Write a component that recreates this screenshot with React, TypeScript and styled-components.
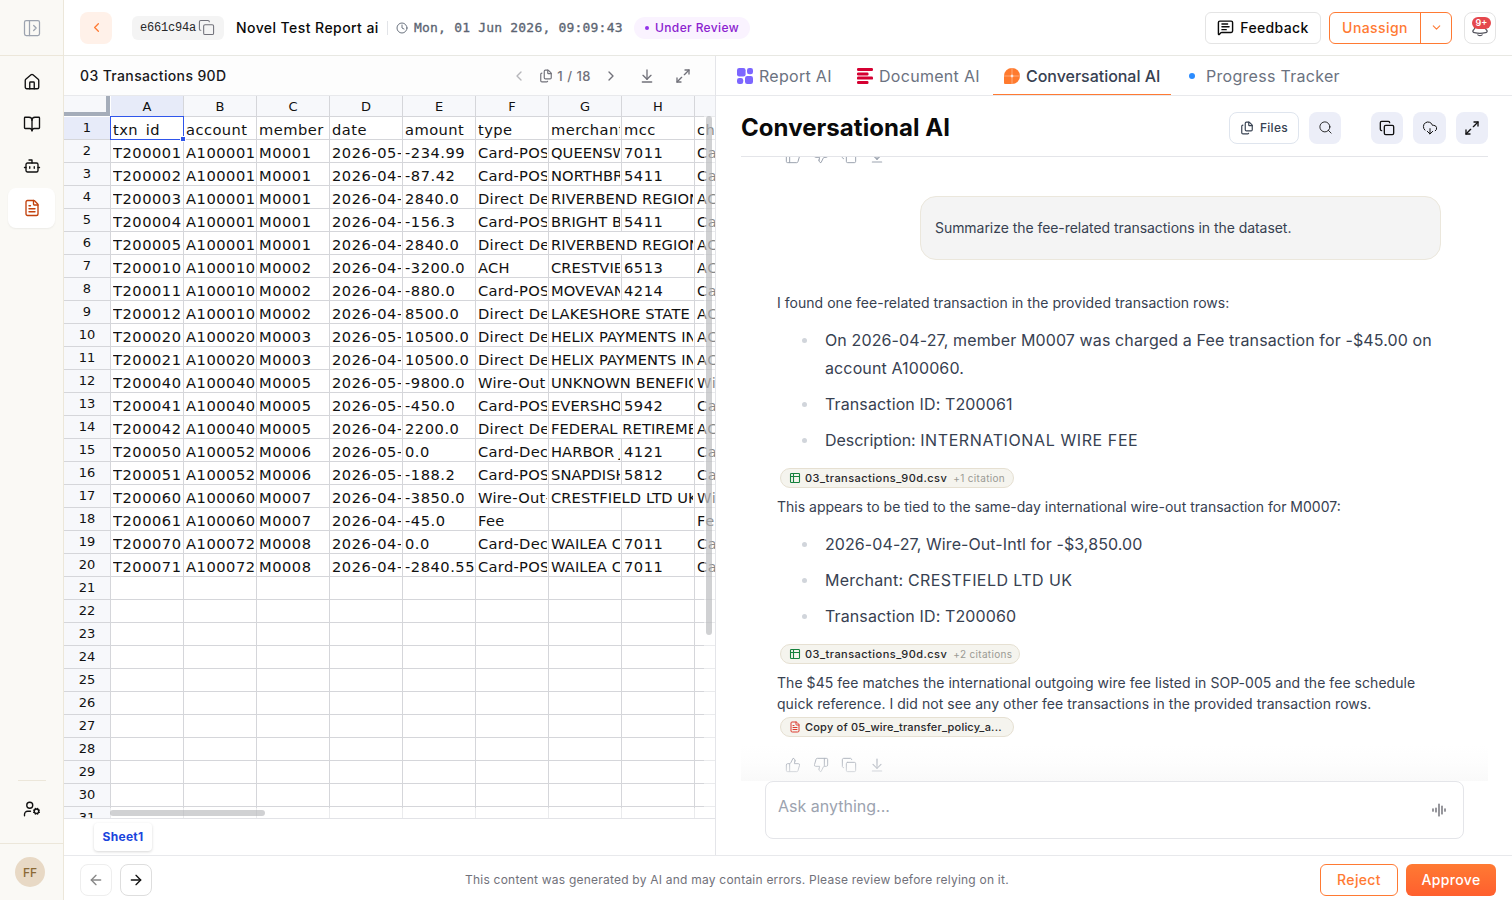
import React from "react";
import styled, { createGlobalStyle, css } from "styled-components";
import {
  ArrowDownToLine, ArrowLeft, ArrowRight, BookOpen, Bot, ChevronDown, ChevronLeft, ChevronRight,
  Clock, Copy, FileText, Files, House, Maximize2, MessageSquareText, PanelLeftOpen, Search,
  ThumbsDown, ThumbsUp, UserCog, CloudDownload,
} from "lucide-react";

const Global = createGlobalStyle`
  * { box-sizing: border-box; }
  body { margin: 0; background: #fff; font-family: Inter, "Noto Sans", sans-serif; color: #0f172a; }
  button { font-family: inherit; padding: 0; margin: 0; background: none; border: 0; letter-spacing: inherit; color: inherit; }
  svg { display: block; flex: none; }
`;

const Shell = styled.div`
  display: flex;
  width: 1512px;
  height: 900px;
  overflow: hidden;
  background: #fff;
`;

/* Side navigation */
const Sidebar = styled.nav`
  display: flex;
  flex-direction: column;
  width: 64px;
  background: #faf9f5;
  border-right: 1px solid #ece7da;
`;
const SidebarTop = styled.div`
  display: flex;
  align-items: center;
  justify-content: center;
  height: 56px;
  border-bottom: 1px solid #ece7da;
  color: #9ca3af;
`;
const NavList = styled.div`
  display: flex;
  flex-direction: column;
  gap: 2px;
  padding: 6px 8px 0;
  flex: 1;
`;
const NavItem = styled.button<{ $active?: boolean }>`
  display: flex;
  align-items: center;
  justify-content: center;
  width: 47px;
  height: 40px;
  border-radius: 8px;
  color: ${(p) => (p.$active ? "#c2410c" : "#111")};
  ${(p) => p.$active && css`background: #fff; box-shadow: 0 1px 2px rgba(0, 0, 0, 0.06);`}
`;
const NavDivider = styled.div`
  height: 1px;
  margin: 0 17px 8px 18px;
  background: #ece7da;
`;
const SidebarFoot = styled.div`
  display: flex;
  flex-direction: column;
  align-items: center;
`;
const UserArea = styled.div`
  display: flex;
  align-items: center;
  width: 63px;
  height: 57px;
  padding-left: 15px;
  border-top: 1px solid #ece7da;
  margin-top: 14px;
`;
const Avatar = styled.div`
  display: grid;
  place-items: center;
  width: 30px;
  height: 30px;
  border-radius: 50%;
  background: #e8d9c5;
  color: #8b6a35;
  font-size: 12px;
  font-weight: 500;
`;

/* Header */
const Main = styled.div`
  display: flex;
  flex-direction: column;
  width: 1448px;
`;
const Header = styled.header`
  display: flex;
  align-items: center;
  height: 56px;
  padding: 0 16px;
  border-bottom: 1px solid #e8e8e3;
`;
const BackButton = styled.button`
  display: grid;
  place-items: center;
  width: 32px;
  height: 32px;
  border-radius: 8px;
  background: #fff1e9;
  color: #ff7a33;
`;
const IdTag = styled.div`
  display: flex;
  align-items: center;
  gap: 2px;
  width: 92px;
  height: 24px;
  margin-left: 20px;
  padding-left: 8px;
  border-radius: 6px;
  background: #f4f4f4;
  color: #27272a;
  font: 400 12px "Liberation Mono", monospace;
  letter-spacing: -0.2px;
  svg { color: #71717a; }
`;
const ReportName = styled.h1`
  margin: 0 0 0 12px;
  font-size: 14px;
  font-weight: 500;
  letter-spacing: 0.43px;
  width: 143px;
  white-space: nowrap;
  color: #0a0a0a;
`;
const Rule = styled.span`
  width: 1px;
  height: 14px;
  margin: 0 8px;
  background: #e2e4e8;
`;
const Timestamp = styled.div`
  display: flex;
  align-items: center;
  gap: 6px;
  width: 227px;
  color: #5b6472;
  font: 500 13px "DejaVu Sans Mono", monospace;
  letter-spacing: 0.2px;
  -webkit-text-stroke: 0.3px #5b6472;
  white-space: nowrap;
`;
const Status = styled.div`
  display: flex;
  align-items: center;
  gap: 6px;
  height: 22px;
  width: 116px;
  margin-left: 11px;
  padding-left: 11px;
  border-radius: 11px;
  background: #faf3ff;
  color: #8b22cf;
  font-size: 12px;
  font-weight: 500;
  letter-spacing: 0.37px;
  white-space: nowrap;
  &::before { content: ""; width: 4px; height: 4px; border-radius: 50%; background: #9333ea; }
`;
const HeaderActions = styled.div`
  display: flex;
  margin-left: auto;
`;
const Button = styled.button<{ $w: number; $kind?: "outline" | "solid" }>`
  display: flex;
  align-items: center;
  justify-content: center;
  gap: 6px;
  width: ${(p) => p.$w}px;
  height: 32px;
  border: 1px solid #e4e4e4;
  border-radius: 6px;
  font-size: 14px;
  font-weight: 500;
  letter-spacing: 0.35px;
  color: #0a0a0a;
  ${(p) => p.$kind === "outline" && css`border-color: #ff7a33; color: #ff7a33; padding-bottom: 2px;`}
  ${(p) => p.$kind === "solid" && css`border: 0; color: #fff; background: linear-gradient(#ff7a33, #ff5f2e); padding-bottom: 2px;`}
`;
const SplitButton = styled.div`
  display: flex;
  width: 123px;
  height: 32px;
  margin: 0 12px 0 8px;
  border: 1px solid #ff7a33;
  border-radius: 6px;
  color: #ff7a33;
  font-size: 14px;
  font-weight: 500;
  letter-spacing: 0.42px;
`;
const SplitLabel = styled.button`
  width: 91px;
  border-right: 1px solid #ff7a33;
  font-size: 14px;
  font-weight: 500;
`;
const SplitCaret = styled.button`
  display: grid;
  place-items: center;
  flex: 1;
`;
const BellButton = styled.button`
  position: relative;
  display: grid;
  place-items: center;
  width: 32px;
  height: 32px;
  border: 1px solid #e4e4e4;
  border-radius: 8px;
  color: #52525b;
`;
const Badge = styled.span`
  position: absolute;
  top: 4px;
  left: 7px;
  width: 19px;
  height: 12px;
  border-radius: 6px;
  background: #e5484d;
  color: #fff;
  font-size: 9px;
  line-height: 12px;
  font-weight: 600;
`;

const Body = styled.div`
  display: flex;
  height: 799px;
`;

/* Spreadsheet panel */
const SheetPanel = styled.section`
  display: flex;
  flex-direction: column;
  width: 652px;
  border-right: 1px solid #e4e5e9;
`;
const SheetHead = styled.div`
  display: flex;
  align-items: center;
  height: 40px;
  padding: 0 24px 0 16px;
  border-bottom: 1px solid #e8e9ec;
  background: #fdfdfd;
  color: #71717a;
`;
const SheetTitle = styled.h2`
  flex: 1;
  margin: 0;
  font-size: 14px;
  font-weight: 500;
  letter-spacing: 0.36px;
  color: #18181b;
`;
const Pager = styled.div`
  display: flex;
  align-items: center;
  font-size: 13px;
  font-weight: 500;
  letter-spacing: 0.5px;
  gap: 4px;
  margin: 0 12px 0 12px;
`;
const HeadIcons = styled.div`
  display: flex;
  gap: 20px;
  margin-left: 20px;
`;
const Grid = styled.div`
  position: relative;
  height: 722px;
  overflow: hidden;
  font-family: "DejaVu Sans", sans-serif;
  color: #111;
`;
const GridRow = styled.div`
  display: flex;
  height: 23px;
  &:first-child { height: 21px; }
`;
const gridLine = "#d5d6da";
const Corner = styled.div`
  width: 46px;
  height: 20px;
  margin-right: 1px;
  flex: none;
  background: #f7f8fb;
  border-right: 4px solid #a5adba;
  border-bottom: 4px solid #a5adba;
`;
const ColHead = styled.div<{ $on?: boolean }>`
  width: 73px;
  flex: none;
  border-right: 1px solid ${gridLine};
  border-bottom: 1px solid ${gridLine};
  background: ${(p) => (p.$on ? "#e7ebf9" : "#f7f8fb")};
  font-size: 13px;
  line-height: 22px;
  text-align: center;
`;
const RowHead = styled.div<{ $on?: boolean }>`
  width: 47px;
  flex: none;
  border-right: 1px solid ${gridLine};
  border-bottom: 1px solid ${gridLine};
  background: ${(p) => (p.$on ? "#e7ebf9" : "#f7f8fb")};
  font-size: 13px;
  line-height: 22px;
  text-align: center;
`;
const Cell = styled.div<{ $wide?: boolean; $track: number }>`
  width: ${(p) => (p.$wide ? 146 : 73)}px;
  flex: none;
  padding: 0 1px 0 2px;
  overflow: clip;
  overflow-clip-margin: content-box;
  border-right: 1px solid ${gridLine};
  border-bottom: 1px solid ${gridLine};
  font-size: 14.67px;
  letter-spacing: ${(p) => p.$track}px;
  line-height: 26px;
  white-space: nowrap;
`;
const Selection = styled.div`
  position: absolute;
  left: 46px;
  top: 20px;
  width: 74px;
  height: 24px;
  border: 1px solid #2f55eb;
  box-shadow: inset 0 -2px #fff;
  &::after {
    content: "";
    position: absolute;
    right: -2px;
    bottom: -2px;
    width: 4px;
    height: 4px;
    background: #2f55eb;
    outline: 1px solid #fff;
  }
`;
const TrackV = styled.div`
  position: absolute;
  right: 0;
  top: 20px;
  width: 11px;
  bottom: 0;
  padding: 0 3px 0 2px;
  background: rgba(255, 255, 255, 0.5);
  &::before { content: ""; display: block; height: 519px; border-radius: 3px; background: rgba(170, 171, 174, 0.55); }
`;
const TrackH = styled.div`
  position: absolute;
  left: 46px;
  right: 0;
  bottom: 0;
  height: 10px;
  padding-top: 2px;
  background: rgba(255, 255, 255, 0.5);
  &::before { content: ""; display: block; width: 155px; height: 6px; border-radius: 3px; background: rgba(170, 171, 174, 0.55); }
`;
const SheetTabs = styled.div`
  flex: 1;
  padding: 4px 0 0 30px;
  border-top: 1px solid #e2e3e7;
`;
const SheetTab = styled.div`
  width: 58px;
  height: 28px;
  border-radius: 4px;
  box-shadow: 0 1px 3px rgba(0, 0, 0, 0.16);
  color: #1a44dd;
  font-size: 12px;
  font-weight: 700;
  letter-spacing: 0.3px;
  line-height: 28px;
  text-align: center;
`;

/* Assistant panel */
const AiPanel = styled.section`
  display: flex;
  flex-direction: column;
  flex: 1;
`;
const Tabs = styled.div`
  display: flex;
  gap: 3px;
  height: 40px;
  padding-left: 10px;
  border-bottom: 1px solid #e8e9ec;
`;
const Tab = styled.button<{ $w: number; $active?: boolean }>`
  display: flex;
  align-items: center;
  gap: 6px;
  width: ${(p) => p.$w}px;
  height: 39px;
  padding-left: 11px;
  font-size: 16px;
  letter-spacing: ${(p) => (p.$active ? -0.03 : 0.29)}px;
  white-space: nowrap;
  color: ${(p) => (p.$active ? "#374151" : "#6b7280")};
  font-weight: ${(p) => (p.$active ? 500 : 400)};
  ${(p) => p.$active && css`box-shadow: inset 0 -1px #ff7a33;`}
`;
const TabDot = styled.span`
  width: 6px;
  height: 6px;
  margin: 0 5px 0 4px;
  border-radius: 50%;
  background: #2b8cff;
`;
const ChatHead = styled.div`
  display: flex;
  align-items: center;
  gap: 10px;
  height: 61px;
  margin: 0 24px 0 25px;
  padding-top: 3px;
  border-bottom: 1px solid #e4e5e9;
`;
const ChatTitle = styled.h2`
  flex: 1;
  margin: 0;
  font-size: 24px;
  font-weight: 700;
  letter-spacing: 0.05px;
  color: #0a0a0a;
`;
const FilesButton = styled.button`
  display: flex;
  align-items: center;
  justify-content: center;
  gap: 6px;
  width: 70px;
  height: 32px;
  border: 1px solid #dfe5ee;
  border-radius: 8px;
  color: #374151;
  font-size: 12px;
  font-weight: 500;
  letter-spacing: 0.3px;
`;
const ToolButton = styled.button<{ $gap?: boolean; $w?: number }>`
  display: grid;
  place-items: center;
  width: ${(p) => p.$w ?? 32}px;
  height: 32px;
  border-radius: 8px;
  background: #eceef8;
  color: #111;
  margin-left: ${(p) => (p.$gap ? 20 : 0)}px;
`;
const Feed = styled.div`
  position: relative;
  height: 624px;
  margin: 0 24px 0 25px;
  padding: 0 36px;
  overflow: hidden;
  color: #374151;
  &::after {
    content: "";
    position: absolute;
    left: 0;
    right: 0;
    bottom: 0;
    height: 36px;
    background: linear-gradient(rgba(249, 249, 249, 0), rgba(249, 249, 249, 0.3) 50%, rgba(249, 249, 249, 0.95));
  }
`;
const Reactions = styled.div<{ $top: number }>`
  display: flex;
  gap: 12px;
  margin: ${(p) => p.$top}px 0 0 8px;
  color: #9ca3af;
`;
const Question = styled.div`
  width: 521px;
  height: 64px;
  margin: 32px 0 0 143px;
  padding-left: 14px;
  border: 1px solid #ebe7dc;
  border-radius: 16px;
  background: #f4f4f4;
  font-size: 14px;
  letter-spacing: -0.05px;
  line-height: 62px;
`;
const Paragraph = styled.p<{ $top: number; $track?: number }>`
  margin: ${(p) => p.$top}px 0 0;
  font-size: 14px;
  line-height: 21px;
  letter-spacing: ${(p) => p.$track ?? 0}px;
  white-space: pre-line;
`;
const List = styled.ul`
  display: flex;
  flex-direction: column;
  gap: 8px;
  margin: 13px 0 14px;
  padding: 0 0 0 25px;
  list-style: none;
`;
const Item = styled.li<{ $track?: number }>`
  display: flex;
  gap: 18px;
  font-size: 16px;
  line-height: 28px;
  letter-spacing: ${(p) => p.$track ?? 0.12}px;
  white-space: pre-line;
  &::before { content: ""; flex: none; width: 5px; height: 5px; margin-top: 12px; border-radius: 50%; background: #d1d5db; }
`;
const Caps = styled.span<{ $track: number }>`
  letter-spacing: ${(p) => p.$track}px;
`;
const Citation = styled.div<{ $w: number; $track?: number; $drop?: boolean }>`
  display: flex;
  align-items: center;
  gap: 4px;
  width: ${(p) => p.$w}px;
  height: 20px;
  margin-left: 3px;
  padding: 0 0 ${(p) => (p.$drop ? 0 : 1)}px 8px;
  border: 1px solid #e6e0d2;
  border-radius: 10px;
  background: #f5f4ee;
  color: #27272a;
  font-size: 11px;
  font-weight: 500;
  line-height: ${(p) => (p.$drop ? 18 : 16)}px;
  letter-spacing: ${(p) => p.$track ?? 0.47}px;
  white-space: nowrap;
  svg { margin-top: ${(p) => (p.$drop ? 0 : 1)}px; }
`;
const CitationCount = styled.span`
  margin-left: 2px;
  padding-top: 1px;
  color: #9a9a94;
  font-size: 10px;
  font-weight: 400;
  letter-spacing: 0.33px;
`;
const Composer = styled.div`
  display: flex;
  justify-content: space-between;
  height: 58px;
  width: 699px;
  margin-left: 49px;
  padding: 14px 17px 0 12px;
  border: 1px solid #e4e5e9;
  border-radius: 8px;
  color: #9ca3af;
  font-size: 16px;
  line-height: 21px;
  svg { margin-top: 7px; }
`;

/* Footer */
const Footer = styled.footer`
  display: flex;
  align-items: center;
  height: 45px;
  padding: 4px 16px 0;
  border-top: 1px solid #e8e9ec;
  gap: 8px;
`;
const StepButton = styled.button<{ $muted?: boolean }>`
  display: grid;
  place-items: center;
  width: 32px;
  height: 32px;
  border: 1px solid #dedede;
  border-radius: 8px;
  color: #111;
  opacity: ${(p) => (p.$muted ? 0.5 : 1)};
`;
const Disclaimer = styled.p`
  flex: 1;
  margin: 0 0 0 305px;
  padding-bottom: 2px;
  color: #71717a;
  font-size: 12px;
  letter-spacing: 0.225px;
`;

const columns = ["A", "B", "C", "D", "E", "F", "G", "H", ""];
const rows = [
  "txn_id|account|member|date|amount|type|merchant|mcc|ch",
  "T200001|A100001|M0001|2026-05-|-234.99|Card-POS|QUEENSW|7011|Ca",
  "T200002|A100001|M0001|2026-04-|-87.42|Card-POS|NORTHBR|5411|Ca",
  "T200003|A100001|M0001|2026-04-|2840.0|Direct De|RIVERBEND REGION||AC",
  "T200004|A100001|M0001|2026-04-|-156.3|Card-POS|BRIGHT B|5411|Ca",
  "T200005|A100001|M0001|2026-04-|2840.0|Direct De|RIVERBEND REGION||AC",
  "T200010|A100010|M0002|2026-04-|-3200.0|ACH|CRESTVIE|6513|AC",
  "T200011|A100010|M0002|2026-04-|-880.0|Card-POS|MOVEVAN|4214|Ca",
  "T200012|A100010|M0002|2026-04-|8500.0|Direct De|LAKESHORE STATE||AC",
  "T200020|A100020|M0003|2026-05-|10500.0|Direct De|HELIX PAYMENTS IN||AC",
  "T200021|A100020|M0003|2026-04-|10500.0|Direct De|HELIX PAYMENTS IN||AC",
  "T200040|A100040|M0005|2026-05-|-9800.0|Wire-Out|UNKNOWN BENEFIC||Wi",
  "T200041|A100040|M0005|2026-05-|-450.0|Card-POS|EVERSHO|5942|Ca",
  "T200042|A100040|M0005|2026-04-|2200.0|Direct De|FEDERAL RETIREME||AC",
  "T200050|A100052|M0006|2026-05-|0.0|Card-Dec|HARBOR J|4121|Ca",
  "T200051|A100052|M0006|2026-05-|-188.2|Card-POS|SNAPDISH|5812|Ca",
  "T200060|A100060|M0007|2026-04-|-3850.0|Wire-Out-|CRESTFIELD LTD UK||Wi",
  "T200061|A100060|M0007|2026-04-|-45.0|Fee| | |Fe",
  "T200070|A100072|M0008|2026-04-|0.0|Card-Dec|WAILEA C|7011|Ca",
  "T200071|A100072|M0008|2026-04-|-2840.55|Card-POS|WAILEA C|7011|Ca",
].map((r) => r.split("|"));

/* Numeric columns are set wider than the upper-case merchant names. */
const tracking = (r: number, c: number) => (r === 0 ? 0.45 : c === 6 ? 0.08 : c === 5 ? 0.3 : 0.52);

const GridIcon = () => (
  <svg width="16" height="16" viewBox="0 0 16 16" fill="#7c66ff">
    <rect width="8.6" height="8.4" rx="2.2" /><rect x="10" width="6" height="6.2" rx="2.2" />
    <rect y="10" width="6.2" height="6" rx="2.2" /><rect x="8" y="8" width="8" height="8" rx="2.2" />
  </svg>
);
const LinesIcon = () => (
  <svg width="16" height="16" viewBox="0 0 16 16" fill="#d50032">
    <rect width="16" height="3" rx="1.2" /><rect y="4.4" width="11.5" height="3" rx="1.2" />
    <rect y="8.6" width="16" height="3" rx="1.2" /><rect y="13" width="11.5" height="3" rx="1.2" />
  </svg>
);
const BubbleIcon = () => (
  <svg width="16" height="16" viewBox="0 0 16 16">
    <path d="M8 0a8 8 0 1 1 0 16H1a1 1 0 0 1-1-1V8a8 8 0 0 1 8-8z" fill="#ff7a2e" />
    <path d="M8 0v16M0 8h16" stroke="#ffb88f" strokeWidth="0.8" />
    <path d="M8 6l.6 1.4L10 8l-1.4.6L8 10l-.6-1.4L6 8l1.4-.6z" fill="#fff" />
  </svg>
);
const WaveIcon = () => (
  <svg width="14" height="14" viewBox="0 0 14 14" stroke="#52525b" strokeWidth="1.2" strokeLinecap="round">
    <path d="M1 5.8v2.4M4 5v4M7 1v12M10 3v8M13 5.8v2.4" />
  </svg>
);
const TableIcon = () => (
  <svg width="12" height="12" viewBox="0 0 12 12" fill="none" stroke="#15803d" strokeWidth="1.1">
    <rect x="1.5" y="1.5" width="9" height="9" rx="0.8" /><path d="M1.5 4.5h9M4.5 1.5v9" />
  </svg>
);
const BellIcon = () => (
  <svg width="18" height="18" viewBox="0 0 18 18" fill="none" stroke="currentColor" strokeWidth="1.2">
    <path d="M4.5 6.5a4.5 4.5 0 0 1 9 0c0 3 1 3.5 2.5 5 .6 1-.2 1.8-1.5 2.2-3.5.8-7.5.8-11 0-1.3-.4-2.1-1.2-1.5-2.2C3.5 10 4.5 9.5 4.5 6.5z" />
    <path d="M6.500 15.500c1 1.600 4 1.600 5 0" />
  </svg>
);

const ReactionIcons = ({ top }: { top: number }) => (
  <Reactions $top={top}>
    <ThumbsUp size={16} strokeWidth={1.5} /><ThumbsDown size={16} strokeWidth={1.5} />
    <Copy size={16} strokeWidth={1.5} /><ArrowDownToLine size={16} strokeWidth={1.7} />
  </Reactions>
);

export default function App() {
  return (
    <Shell>
      <Global />
      <Sidebar>
        <SidebarTop><PanelLeftOpen size={20} strokeWidth={1.5} /></SidebarTop>
        <NavList>
          <NavItem><House size={18} strokeWidth={1.8} /></NavItem>
          <NavItem><BookOpen size={18} strokeWidth={1.8} /></NavItem>
          <NavItem><Bot size={18} strokeWidth={1.8} /></NavItem>
          <NavItem $active><FileText size={18} strokeWidth={1.8} /></NavItem>
        </NavList>
        <NavDivider />
        <SidebarFoot>
          <NavItem><UserCog size={18} strokeWidth={1.8} /></NavItem>
          <UserArea><Avatar>FF</Avatar></UserArea>
        </SidebarFoot>
      </Sidebar>
      <Main>
        <Header>
          <BackButton><ChevronLeft size={15} /></BackButton>
          <IdTag>e661c94a<Copy size={17} strokeWidth={1.5} /></IdTag>
          <ReportName>Novel Test Report ai</ReportName>
          <Rule />
          <Timestamp><Clock size={12} strokeWidth={1.8} />Mon, 01 Jun 2026, 09:09:43</Timestamp>
          <Status>Under Review</Status>
          <HeaderActions>
            <Button $w={116}><MessageSquareText size={17} />Feedback</Button>
            <SplitButton>
              <SplitLabel>Unassign</SplitLabel>
              <SplitCaret><ChevronDown size={13} /></SplitCaret>
            </SplitButton>
            <BellButton><BellIcon /><Badge>9+</Badge></BellButton>
          </HeaderActions>
        </Header>
        <Body>
          <SheetPanel>
            <SheetHead>
              <SheetTitle>03 Transactions 90D</SheetTitle>
              <ChevronLeft size={16} opacity={0.5} />
              <Pager><Files size={14} />1 / 18</Pager>
              <ChevronRight size={16} />
              <HeadIcons><ArrowDownToLine size={16} /><Maximize2 size={16} /></HeadIcons>
            </SheetHead>
            <Grid>
              <GridRow>
                <Corner />
                {columns.map((c, i) => <ColHead key={i} $on={i === 0}>{c}</ColHead>)}
              </GridRow>
              {Array.from({ length: 31 }, (_, r) => (
                <GridRow key={r}>
                  <RowHead $on={r === 0}>{r + 1}</RowHead>
                  {columns.map((_, c) => {
                    const row = rows[r];
                    if (row && c === 7 && !row[7]) return null;
                    return <Cell key={c} $track={tracking(r, c)} $wide={!!row && c === 6 && !row[7]}>{row?.[c]}</Cell>;
                  })}
                </GridRow>
              ))}
              <Selection />
              <TrackV />
              <TrackH />
            </Grid>
            <SheetTabs><SheetTab>Sheet1</SheetTab></SheetTabs>
          </SheetPanel>
          <AiPanel>
            <Tabs>
              <Tab $w={117}><GridIcon />Report AI</Tab>
              <Tab $w={144}><LinesIcon />Document AI</Tab>
              <Tab $w={178} $active><BubbleIcon />Conversational AI</Tab>
              <Tab $w={180}><TabDot />Progress Tracker</Tab>
            </Tabs>
            <ChatHead>
              <ChatTitle>Conversational AI</ChatTitle>
              <FilesButton><Files size={14} />Files</FilesButton>
              <ToolButton><Search size={15} strokeWidth={1.4} /></ToolButton>
              <ToolButton $gap><Copy size={16} /></ToolButton>
              <ToolButton $w={33}><CloudDownload size={16} strokeWidth={1.5} /></ToolButton>
              <ToolButton><Maximize2 size={16} /></ToolButton>
            </ChatHead>
            <Feed>
              <ReactionIcons top={-9} />
              <Question>Summarize the fee-related transactions in the dataset.</Question>
              <Paragraph $top={32} $track={0.03}>I found one fee-related transaction in the provided transaction rows:</Paragraph>
              <List>
                <Item>{"On 2026-04-27, member M0007 was charged a Fee transaction for -$45.00 on\naccount A100060."}</Item>
                <Item>Transaction ID: T200061</Item>
                <Item $track={-0.04}><div>Description: <Caps $track={0.6}>INTERNATIONAL WIRE FEE</Caps></div></Item>
              </List>
              <Citation $w={234}>
                <TableIcon />03_transactions_90d.csv<CitationCount>+1 citation</CitationCount>
              </Citation>
              <Paragraph $top={8}>This appears to be tied to the same-day international wire-out transaction for M0007:</Paragraph>
              <List>
                <Item $track={0.08}>2026-04-27, Wire-Out-Intl for -$3,850.00</Item>
                <Item $track={0.2}><div>Merchant: <Caps $track={0.43}>CRESTFIELD LTD UK</Caps></div></Item>
                <Item>Transaction ID: T200060</Item>
              </List>
              <Citation $w={240}>
                <TableIcon />03_transactions_90d.csv<CitationCount>+2 citations</CitationCount>
              </Citation>
              <Paragraph $top={8} $track={0.05}>{"The $45 fee matches the international outgoing wire fee listed in SOP-005 and the fee schedule\nquick reference. I did not see any other fee transactions in the provided transaction rows."}</Paragraph>
              <Paragraph as="div" $top={3}>
                <Citation $w={234} $track={0.2} $drop><FileText size={12} color="#dc3b30" />Copy of 05_wire_transfer_policy_a...</Citation>
              </Paragraph>
              <ReactionIcons top={20} />
            </Feed>
            <Composer>Ask anything...<WaveIcon /></Composer>
          </AiPanel>
        </Body>
        <Footer>
          <StepButton $muted><ArrowLeft size={16} /></StepButton>
          <StepButton><ArrowRight size={16} /></StepButton>
          <Disclaimer>This content was generated by AI and may contain errors. Please review before relying on it.</Disclaimer>
          <Button $w={78} $kind="outline">Reject</Button>
          <Button $w={90} $kind="solid">Approve</Button>
        </Footer>
      </Main>
    </Shell>
  );
}
